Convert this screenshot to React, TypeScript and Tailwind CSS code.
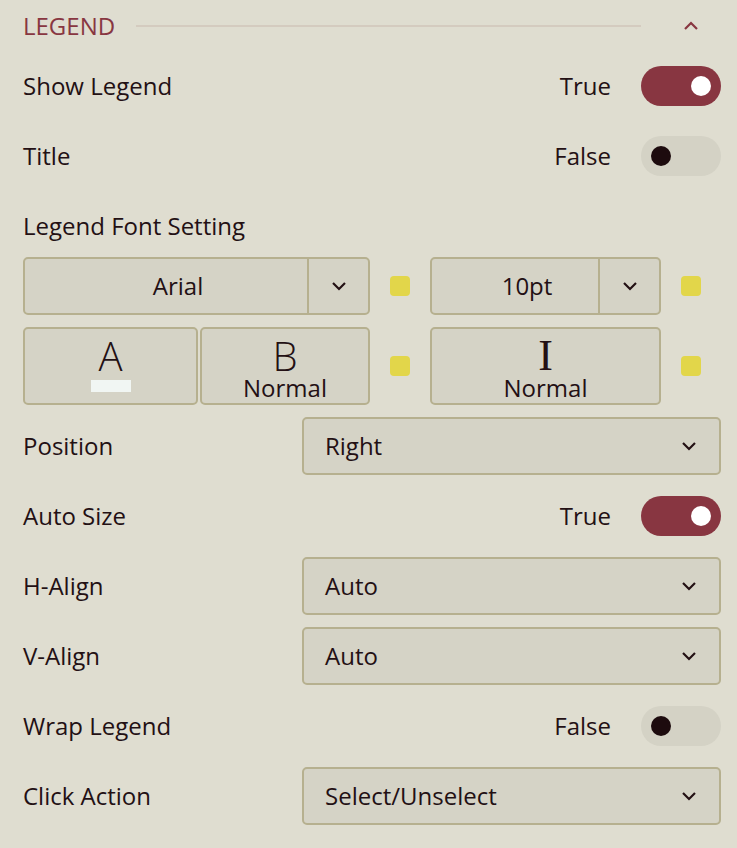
import { useState } from "react";

const font = { fontFamily: '"Open Sans", "Noto Sans", sans-serif' };

function Chevron({ up, className = "" }: { up?: boolean; className?: string }) {
  return (
    <svg width="16" height="10" viewBox="0 0 16 10" className={className} fill="none">
      <path d={up ? "M2 8 L8 2 L14 8" : "M2 2 L8 8 L14 2"} stroke="currentColor" strokeWidth="2.2" />
    </svg>
  );
}

function Toggle({ on, onClick }: { on: boolean; onClick: () => void }) {
  return (
    <button
      onClick={onClick}
      className={`flex h-[40px] w-[80px] items-center rounded-full px-[10px] ${on ? "justify-end bg-[#883641]" : "justify-start bg-[#d4d2c5]"}`}
    >
      <span className={`block h-[20px] w-[20px] rounded-full ${on ? "bg-white" : "bg-[#1d0b0e]"}`} />
    </button>
  );
}

function SwitchRow({ label, value }: { label: string; value: boolean }) {
  const [on, setOn] = useState(value);
  return (
    <div className="flex h-[70px] items-center justify-between">
      <span>{label}</span>
      <div className="flex items-center gap-[30px]">
        <span>{on ? "True" : "False"}</span>
        <Toggle on={on} onClick={() => setOn(!on)} />
      </div>
    </div>
  );
}

function SelectRow({ label, value }: { label: string; value: string }) {
  return (
    <div className="flex h-[70px] items-center justify-between">
      <span>{label}</span>
      <div className="flex h-[58px] w-[419px] items-center justify-between rounded-[5px] border-2 border-[#b6b08f] bg-[#d5d3c6] pl-[21px] pr-[22px]">
        <span>{value}</span>
        <Chevron className="text-[#231014]" />
      </div>
    </div>
  );
}

function Dot() {
  return <div className="h-[20px] w-[20px] shrink-0 rounded-[4px] bg-[#e2d64a]" />;
}

function StyleButton({ glyph, serif, width, children }: { glyph: string; serif?: boolean; width: string; children: React.ReactNode }) {
  return (
    <div className={`flex h-[78px] ${width} flex-col items-center rounded-[5px] border-2 border-[#b6b08f] bg-[#d5d3c6] pt-[7px]`}>
      <span
        className={`leading-[40px] ${serif ? "text-[44px]" : "text-[40px] font-light"}`}
        style={serif ? { fontFamily: '"Liberation Serif", serif' } : undefined}
      >
        {glyph}
      </span>
      {children}
    </div>
  );
}

export default function App() {
  return (
    <div style={font} className="min-h-[848px] w-[737px] bg-[#dfddd0] pl-[23px] pr-[16px] text-[24px] text-[#231014]">
      {/* header */}
      <div className="flex h-[51px] items-center">
        <span className="text-[24px] text-[#883641]">LEGEND</span>
        <div className="ml-[21px] h-[2px] w-[505px] bg-[#d4cbbf]" />
        <Chevron up className="ml-[42px] text-[#883641]" />
      </div>

      <SwitchRow label="Show Legend" value={true} />
      <SwitchRow label="Title" value={false} />

      <div className="flex h-[70px] items-center">Legend Font Setting</div>

      {/* font family / size */}
      <div className="-mt-[4px] flex items-center">
        <div className="flex h-[58px] w-[347px] rounded-[5px] border-2 border-[#b6b08f] bg-[#d5d3c6]">
          <div className="flex flex-1 items-center justify-center pl-[24px]">Arial</div>
          <div className="flex w-[61px] items-center justify-center border-l-2 border-[#b6b08f]">
            <Chevron />
          </div>
        </div>
        <div className="ml-[20px]"><Dot /></div>
        <div className="ml-[20px] flex h-[58px] w-[231px] rounded-[5px] border-2 border-[#b6b08f] bg-[#d5d3c6]">
          <div className="flex flex-1 items-center justify-center pl-[24px]">10pt</div>
          <div className="flex w-[61px] items-center justify-center border-l-2 border-[#b6b08f]">
            <Chevron />
          </div>
        </div>
        <div className="ml-[20px]"><Dot /></div>
      </div>

      {/* color / bold / italic */}
      <div className="mt-[12px] flex items-center">
        <StyleButton glyph="A" width="w-[175px]">
          <span className="mt-[4px] block h-[12px] w-[40px] bg-[#f1f6f3]" />
        </StyleButton>
        <div className="ml-[2px]">
          <StyleButton glyph="B" width="w-[170px]">
            <span className="leading-[24px]">Normal</span>
          </StyleButton>
        </div>
        <div className="ml-[20px]"><Dot /></div>
        <div className="ml-[20px]">
          <StyleButton glyph="I" serif width="w-[231px]">
            <span className="leading-[24px]">Normal</span>
          </StyleButton>
        </div>
        <div className="ml-[20px]"><Dot /></div>
      </div>

      <div className="mt-[6px]">
        <SelectRow label="Position" value="Right" />
      </div>
      <SwitchRow label="Auto Size" value={true} />
      <SelectRow label="H-Align" value="Auto" />
      <SelectRow label="V-Align" value="Auto" />
      <SwitchRow label="Wrap Legend" value={false} />
      <SelectRow label="Click Action" value="Select/Unselect" />
    </div>
  );
}
